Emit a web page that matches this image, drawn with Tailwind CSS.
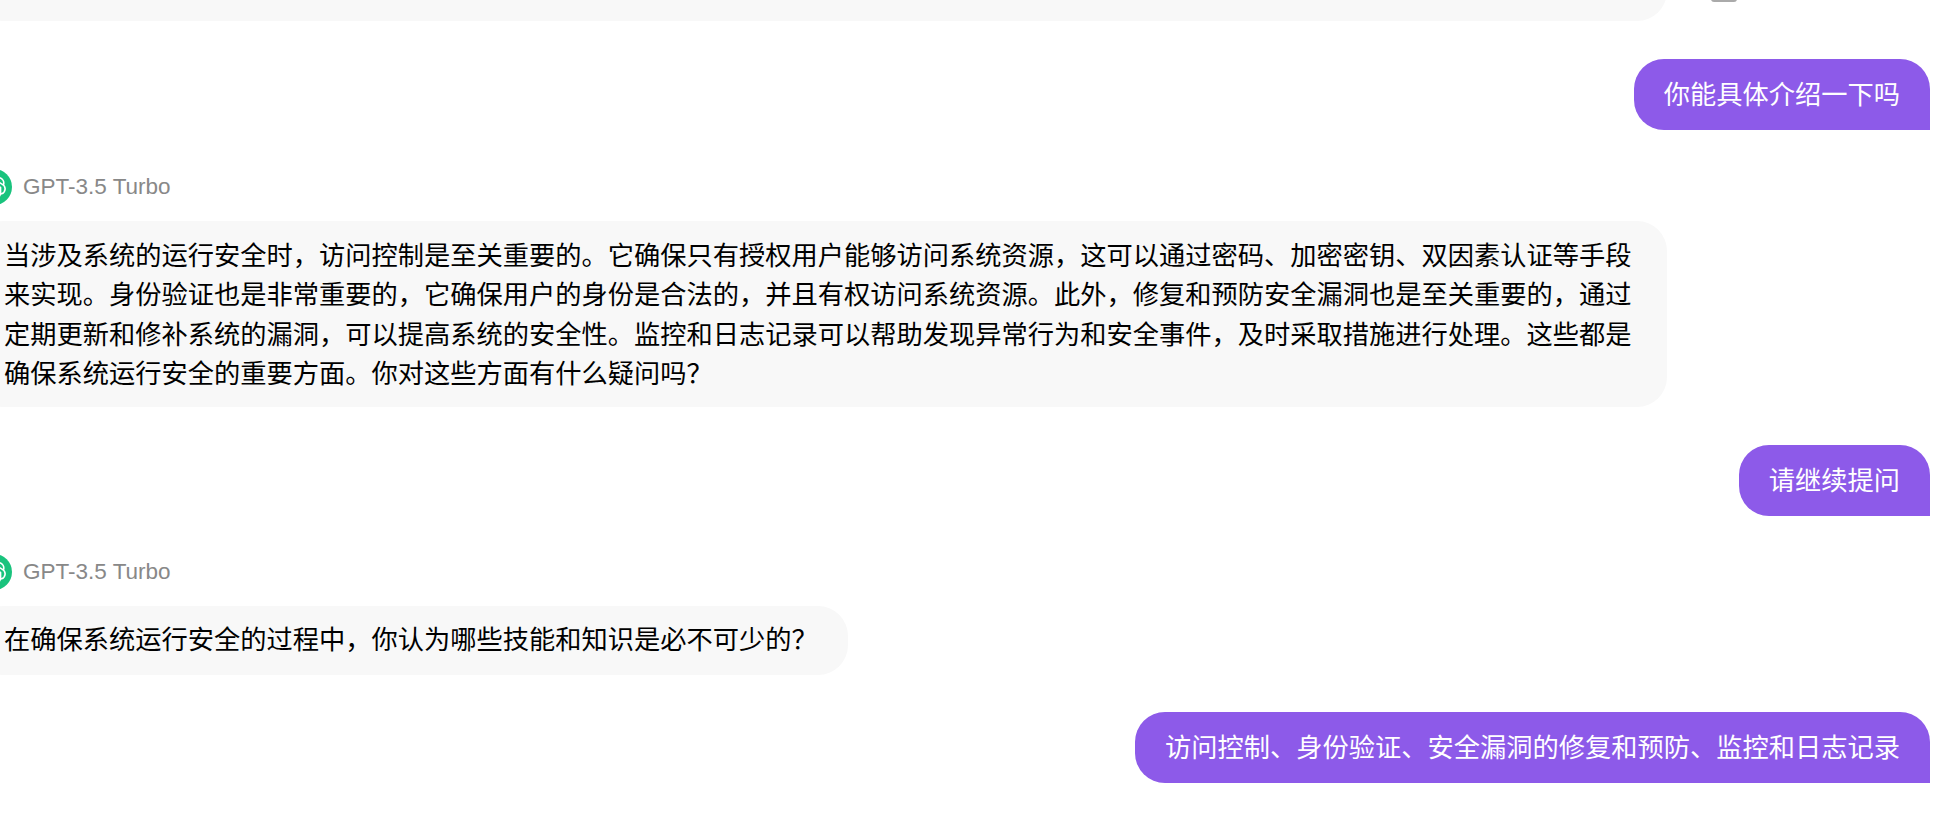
<!DOCTYPE html>
<html lang="zh-CN">
<head>
    <meta charset="UTF-8">
    <title>Chat</title>
    <script src="https://cdn.jsdelivr.net/npm/@tailwindcss/browser@4"></script>
</head>
<body class="bg-white">
<main class="h-[818px] overflow-hidden font-['Liberation_Sans','Noto_Sans_CJK_SC',sans-serif] text-[26.25px] leading-[39.375px] text-black">
    <div class="flex flex-col pr-[30px] mt-[-48px] ml-[-26px]">

        <!-- previous answer, scrolled almost out of view -->
        <div class="flex items-end">
            <div class="w-[1693px] h-[69px] bg-[#f8f8f8] rounded-[30px] px-[30px] py-[15px]">运行安全包括访问控制、身份验证和安全漏洞修复等。</div>
            <div class="w-[26px] h-[26px] ml-[44px] mb-[19px] rounded-[3px] border-2 border-[#aaa]"></div>
        </div>

        <div class="self-end mt-[38px] h-[71px] py-[16.5px] px-[30px] bg-[#8d5ae9] text-white rounded-[30px] rounded-br-none">你能具体介绍一下吗</div>

        <div class="flex items-center gap-[11px] mt-[39px] ml-[2px] h-[36px]">
            <div class="w-[36px] h-[36px] rounded-full bg-[#19c37d] flex items-center justify-center">
                <svg class="w-[24px] h-[24px]" viewBox="0 0 24 24" fill="#fff"><path d="M22.2819 9.8211a5.9847 5.9847 0 0 0-.5157-4.9108 6.0462 6.0462 0 0 0-6.5098-2.9A6.0651 6.0651 0 0 0 4.9807 4.1818a5.9847 5.9847 0 0 0-3.9977 2.9 6.0462 6.0462 0 0 0 .7427 7.0966 5.98 5.98 0 0 0 .511 4.9107 6.051 6.051 0 0 0 6.5146 2.9001A5.9847 5.9847 0 0 0 13.2599 24a6.0557 6.0557 0 0 0 5.7718-4.2058 5.9894 5.9894 0 0 0 3.9977-2.9001 6.0557 6.0557 0 0 0-.7475-7.0729zm-9.022 12.6081a4.4755 4.4755 0 0 1-2.8764-1.0408l.1419-.0804 4.7783-2.7582a.7948.7948 0 0 0 .3927-.6813v-6.7369l2.02 1.1686a.071.071 0 0 1 .038.052v5.5826a4.504 4.504 0 0 1-4.4945 4.4944zm-9.6607-4.1254a4.4708 4.4708 0 0 1-.5346-3.0137l.142.0852 4.783 2.7582a.7712.7712 0 0 0 .7806 0l5.8428-3.3685v2.3324a.0804.0804 0 0 1-.0332.0615L9.74 19.9502a4.4992 4.4992 0 0 1-6.1408-1.6464zM2.3408 7.8956a4.485 4.485 0 0 1 2.3655-1.9728V11.6a.7664.7664 0 0 0 .3879.6765l5.8144 3.3543-2.0201 1.1685a.0757.0757 0 0 1-.071 0l-4.8303-2.7865A4.504 4.504 0 0 1 2.3408 7.872zm16.5963 3.8558L13.1038 8.364 15.1192 7.2a.0757.0757 0 0 1 .071 0l4.8303 2.7913a4.4944 4.4944 0 0 1-.6765 8.1042v-5.6772a.79.79 0 0 0-.407-.667zm2.0107-3.0231l-.142-.0852-4.7735-2.7818a.7759.7759 0 0 0-.7854 0L9.409 9.2297V6.8974a.0662.0662 0 0 1 .0284-.0615l4.8303-2.7866a4.4992 4.4992 0 0 1 6.6802 4.66zM8.3065 12.863l-2.02-1.1638a.0804.0804 0 0 1-.038-.0567V6.0742a4.4992 4.4992 0 0 1 7.3757-3.4537l-.142.0805L8.704 5.459a.7948.7948 0 0 0-.3927.6813zm1.0976-2.3654l2.602-1.4998 2.6069 1.4998v2.9994l-2.5974 1.4997-2.6067-1.4997Z"/></svg>
            </div>
            <span class="text-[22.5px] text-[#888]">GPT-3.5 Turbo</span>
        </div>

        <div class="mt-[16px] w-fit max-w-[1693px] h-[186px] py-[16px] px-[30px] bg-[#f8f8f8] rounded-[30px]">当涉及系统的运行安全时，访问控制是至关重要的。它确保只有授权用户能够访问系统资源，这可以通过密码、加密密钥、双因素认证等手段来实现。身份验证也是非常重要的，它确保用户的身份是合法的，并且有权访问系统资源。此外，修复和预防安全漏洞也是至关重要的，通过定期更新和修补系统的漏洞，可以提高系统的安全性。监控和日志记录可以帮助发现异常行为和安全事件，及时采取措施进行处理。这些都是确保系统运行安全的重要方面。你对这些方面有什么疑问吗？</div>

        <div class="self-end mt-[38px] h-[71px] py-[16.5px] px-[30px] bg-[#8d5ae9] text-white rounded-[30px] rounded-br-none">请继续提问</div>

        <div class="flex items-center gap-[11px] mt-[38px] ml-[2px] h-[36px]">
            <div class="w-[36px] h-[36px] rounded-full bg-[#19c37d] flex items-center justify-center">
                <svg class="w-[24px] h-[24px]" viewBox="0 0 24 24" fill="#fff"><path d="M22.2819 9.8211a5.9847 5.9847 0 0 0-.5157-4.9108 6.0462 6.0462 0 0 0-6.5098-2.9A6.0651 6.0651 0 0 0 4.9807 4.1818a5.9847 5.9847 0 0 0-3.9977 2.9 6.0462 6.0462 0 0 0 .7427 7.0966 5.98 5.98 0 0 0 .511 4.9107 6.051 6.051 0 0 0 6.5146 2.9001A5.9847 5.9847 0 0 0 13.2599 24a6.0557 6.0557 0 0 0 5.7718-4.2058 5.9894 5.9894 0 0 0 3.9977-2.9001 6.0557 6.0557 0 0 0-.7475-7.0729zm-9.022 12.6081a4.4755 4.4755 0 0 1-2.8764-1.0408l.1419-.0804 4.7783-2.7582a.7948.7948 0 0 0 .3927-.6813v-6.7369l2.02 1.1686a.071.071 0 0 1 .038.052v5.5826a4.504 4.504 0 0 1-4.4945 4.4944zm-9.6607-4.1254a4.4708 4.4708 0 0 1-.5346-3.0137l.142.0852 4.783 2.7582a.7712.7712 0 0 0 .7806 0l5.8428-3.3685v2.3324a.0804.0804 0 0 1-.0332.0615L9.74 19.9502a4.4992 4.4992 0 0 1-6.1408-1.6464zM2.3408 7.8956a4.485 4.485 0 0 1 2.3655-1.9728V11.6a.7664.7664 0 0 0 .3879.6765l5.8144 3.3543-2.0201 1.1685a.0757.0757 0 0 1-.071 0l-4.8303-2.7865A4.504 4.504 0 0 1 2.3408 7.872zm16.5963 3.8558L13.1038 8.364 15.1192 7.2a.0757.0757 0 0 1 .071 0l4.8303 2.7913a4.4944 4.4944 0 0 1-.6765 8.1042v-5.6772a.79.79 0 0 0-.407-.667zm2.0107-3.0231l-.142-.0852-4.7735-2.7818a.7759.7759 0 0 0-.7854 0L9.409 9.2297V6.8974a.0662.0662 0 0 1 .0284-.0615l4.8303-2.7866a4.4992 4.4992 0 0 1 6.6802 4.66zM8.3065 12.863l-2.02-1.1638a.0804.0804 0 0 1-.038-.0567V6.0742a4.4992 4.4992 0 0 1 7.3757-3.4537l-.142.0805L8.704 5.459a.7948.7948 0 0 0-.3927.6813zm1.0976-2.3654l2.602-1.4998 2.6069 1.4998v2.9994l-2.5974 1.4997-2.6067-1.4997Z"/></svg>
            </div>
            <span class="text-[22.5px] text-[#888]">GPT-3.5 Turbo</span>
        </div>

        <div class="mt-[16px] w-fit h-[69px] py-[15px] px-[30px] bg-[#f8f8f8] rounded-[30px]">在确保系统运行安全的过程中，你认为哪些技能和知识是必不可少的？</div>

        <div class="self-end mt-[37px] h-[71px] py-[16.5px] px-[30px] bg-[#8d5ae9] text-white rounded-[30px] rounded-br-none">访问控制、身份验证、安全漏洞的修复和预防、监控和日志记录</div>
    </div>
</main>
</body>
</html>
